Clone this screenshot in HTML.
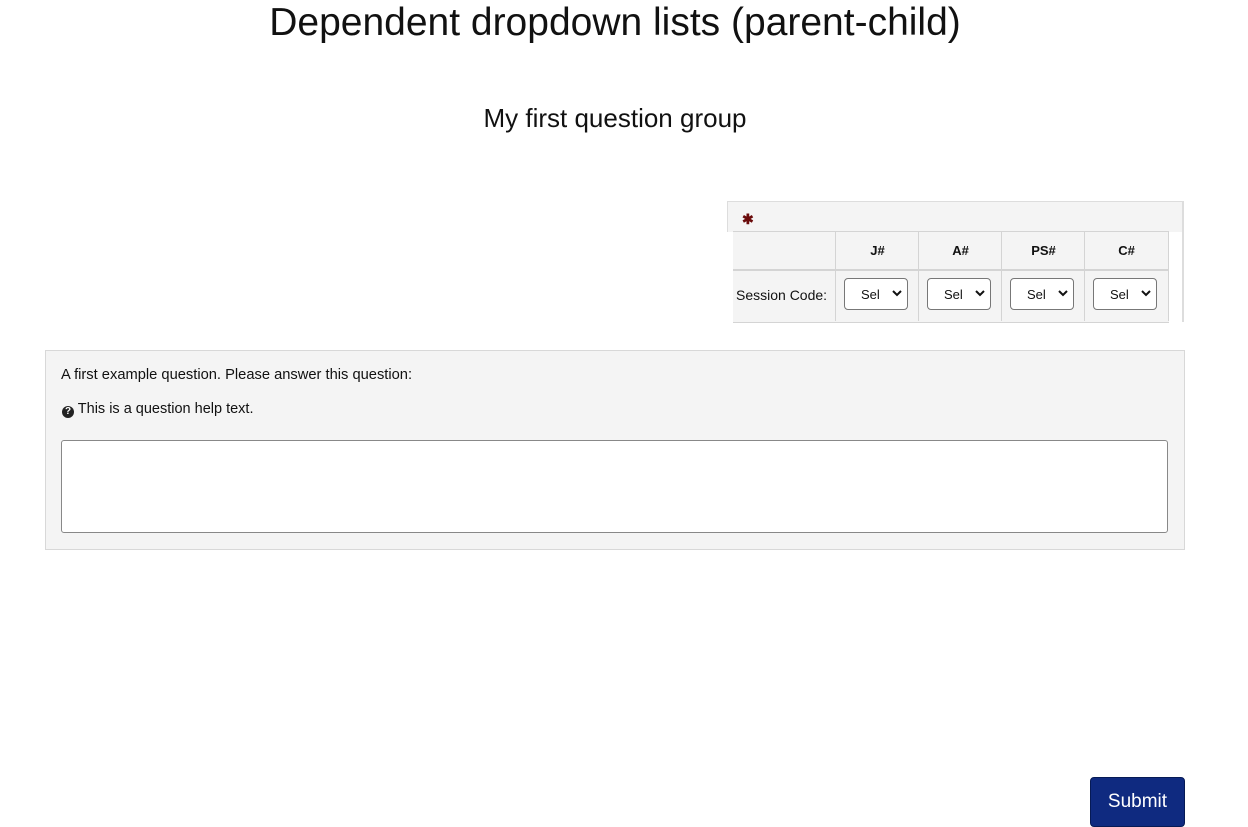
<!DOCTYPE html>
<html><head><meta charset="utf-8"><style>
body{margin:0;width:1248px;height:820px;background:#fff;font-family:"Liberation Sans",sans-serif;color:#111;position:relative;overflow:hidden}
.a{position:absolute}
h1{position:absolute;left:0;width:1230px;top:1px;margin:0;text-align:center;font-weight:normal;font-size:39px;color:#111}
.sel{position:absolute;top:9px;width:64px;height:32px;border:1px solid #777;border-radius:4px;background:#fff;box-sizing:border-box;font-size:13px}
.sel span{position:absolute;left:16px;top:8px}
.sel svg{position:absolute;right:5px;top:11px}
.cell{position:absolute;border-right:1px solid #d4d4d4;box-sizing:border-box}
</style></head><body>
<h1>Dependent dropdown lists (parent-child)</h1>
<div class="a" style="left:0;width:1230px;top:103px;text-align:center;font-size:26px">My first question group</div>

<div class="a" style="left:727px;top:201px;width:455px;height:30px;background:#f4f4f4;border:1px solid #ddd;border-bottom:none"></div>
<div class="a" style="left:1182px;top:201px;width:2px;height:121px;background:#ddd"></div>
<div class="a" style="left:742px;top:211px;color:#6a0a0a;font-size:14px;font-weight:bold">✱</div>
<div class="a" style="left:733px;top:231px;width:436px;height:90px;background:#f4f4f4;border-top:1px solid #d4d4d4;border-bottom:1px solid #d4d4d4">
 <div class="a" style="left:0;top:37px;width:436px;height:2px;background:#d4d4d4"></div>
 <div class="cell" style="left:0;top:0;width:103px;height:89px"></div>
 <div class="cell" style="left:103px;top:0;width:83px;height:89px"></div>
 <div class="cell" style="left:186px;top:0;width:83px;height:89px"></div>
 <div class="cell" style="left:269px;top:0;width:83px;height:89px"></div>
 <div class="cell" style="left:352px;top:0;width:84px;height:89px"></div>
 <div class="a" style="left:103px;width:83px;top:11px;text-align:center;font-size:13px;font-weight:bold">J#</div>
 <div class="a" style="left:186px;width:83px;top:11px;text-align:center;font-size:13px;font-weight:bold">A#</div>
 <div class="a" style="left:269px;width:83px;top:11px;text-align:center;font-size:13px;font-weight:bold">PS#</div>
 <div class="a" style="left:352px;width:83px;top:11px;text-align:center;font-size:13px;font-weight:bold">C#</div>
 <div class="a" style="left:3px;top:55px;font-size:14px">Session Code:</div>
 <div class="a" style="left:111px;top:37px"><div class="sel"><span>Sel</span><svg width="10" height="7"><path d="M1 1l4 4 4-4" stroke="#111" stroke-width="2" fill="none"/></svg></div></div>
 <div class="a" style="left:194px;top:37px"><div class="sel"><span>Sel</span><svg width="10" height="7"><path d="M1 1l4 4 4-4" stroke="#111" stroke-width="2" fill="none"/></svg></div></div>
 <div class="a" style="left:277px;top:37px"><div class="sel"><span>Sel</span><svg width="10" height="7"><path d="M1 1l4 4 4-4" stroke="#111" stroke-width="2" fill="none"/></svg></div></div>
 <div class="a" style="left:360px;top:37px"><div class="sel"><span>Sel</span><svg width="10" height="7"><path d="M1 1l4 4 4-4" stroke="#111" stroke-width="2" fill="none"/></svg></div></div>
</div>

<div class="a" style="left:45px;top:350px;width:1138px;height:198px;background:#f4f4f4;border:1px solid #d8d8d8">
 <div class="a" style="left:15px;top:16px;font-size:14.7px">A first example question. Please answer this question:</div>
 <div class="a" style="left:16px;top:50px;font-size:14.5px"><span style="display:inline-block;width:12px;height:12px;border-radius:50%;background:#222;color:#fff;font-size:10px;font-weight:bold;text-align:center;line-height:12px;vertical-align:-1px">?</span> This is a question help text.</div>
 <div class="a" style="left:15px;top:89px;width:1107px;height:93px;background:#fff;border:1px solid #888;border-radius:3px;box-sizing:border-box"></div>
</div>

<div class="a" style="left:1090px;top:777px;width:95px;height:50px;background:#0f2a80;border:1px solid #061a55;border-radius:4px;box-sizing:border-box;color:#fff;font-size:19px;text-align:center;padding-top:13px">Submit</div>
</body></html>
